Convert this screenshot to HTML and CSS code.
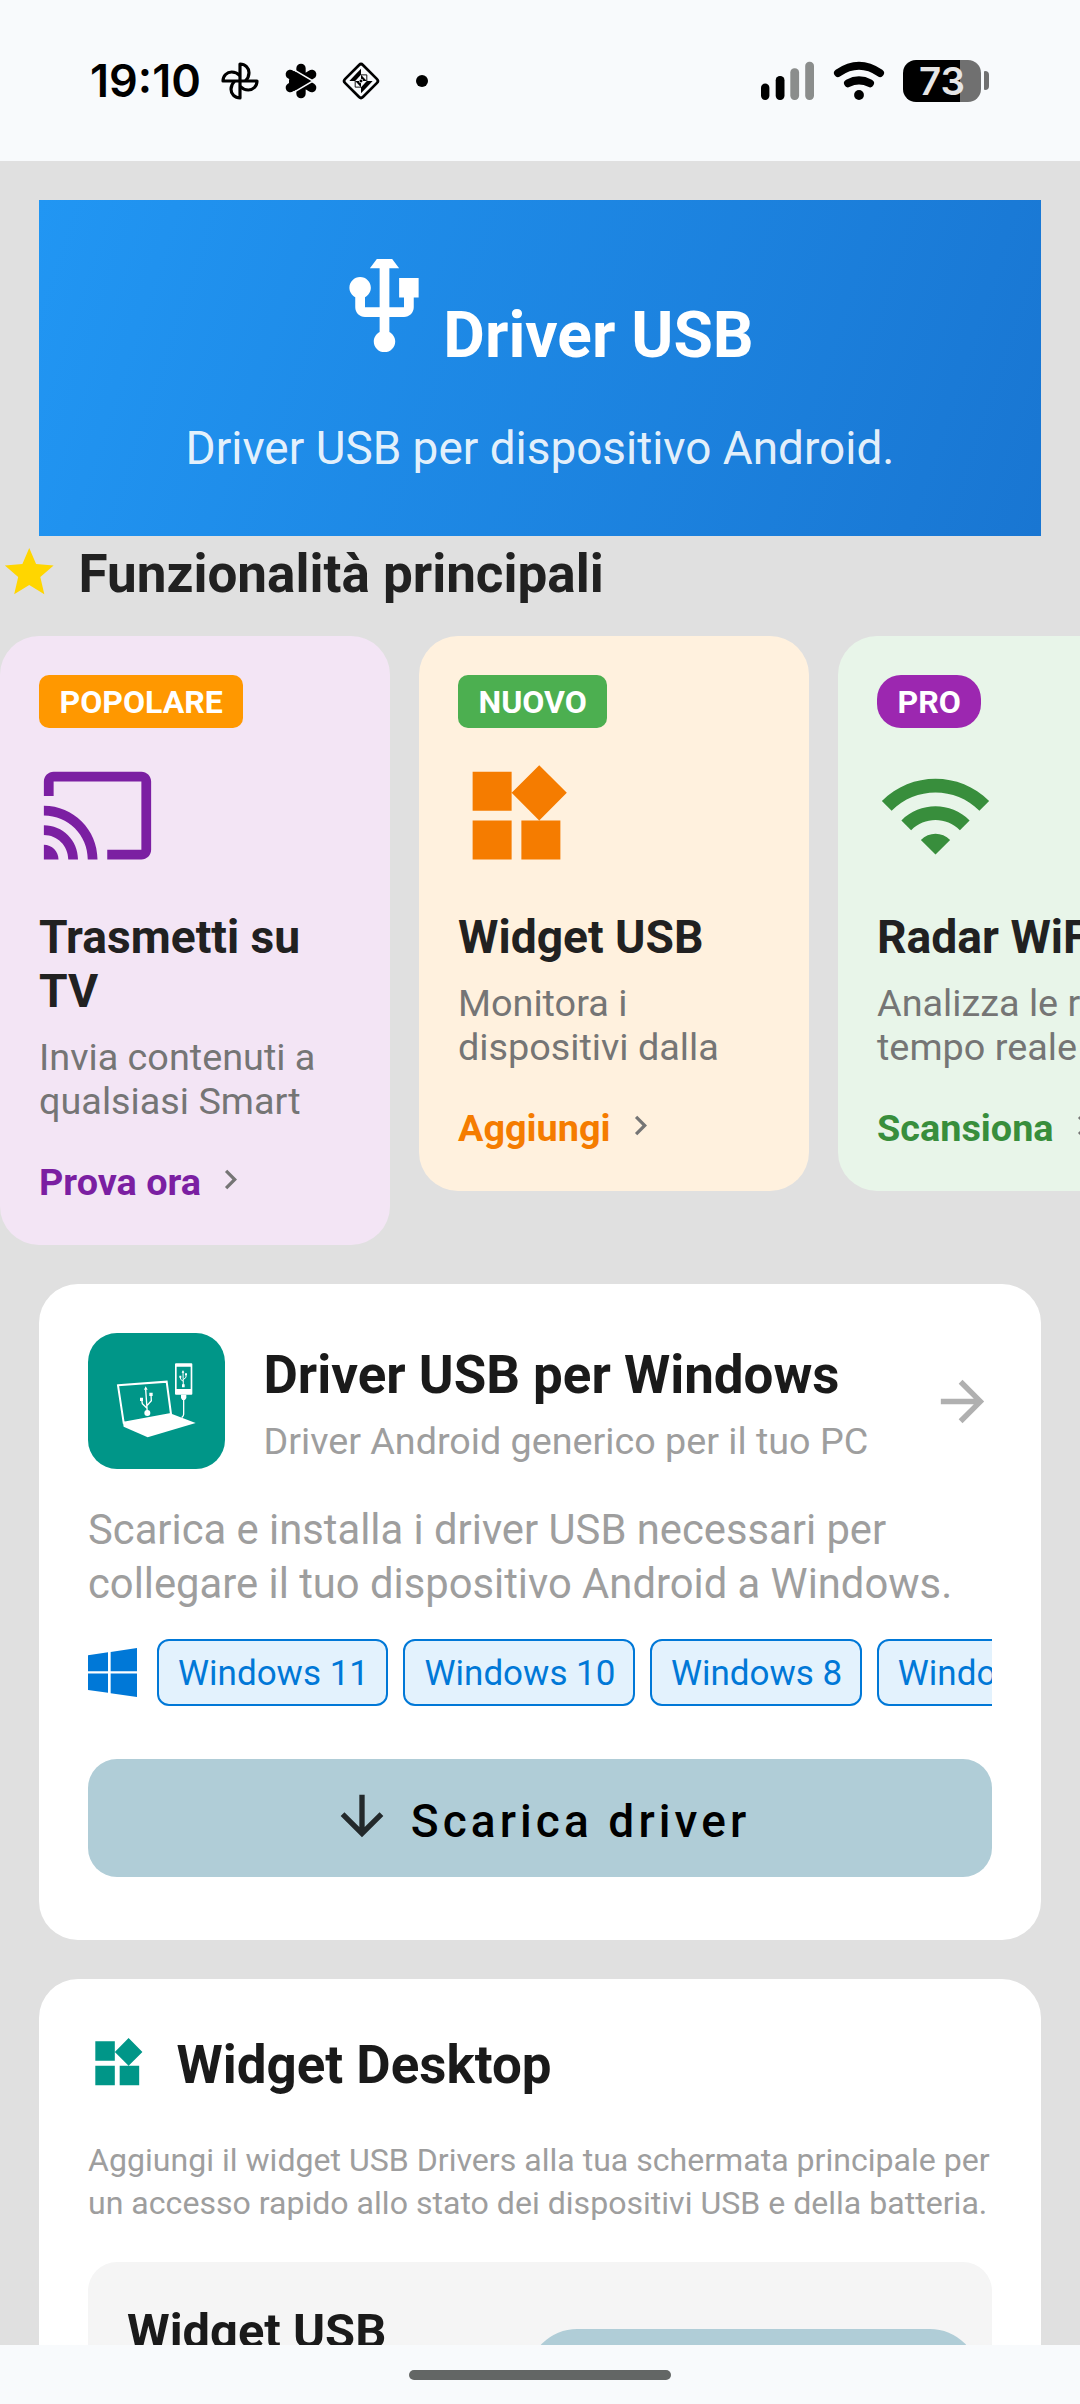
FILE: index.html
```
<!DOCTYPE html>
<html lang="it">
<head>
<meta charset="utf-8">
<title>Driver USB</title>
<link rel="stylesheet" href="styles.css">
</head>
<body>
<div class="screen">
  <header class="status">
    <div class="status-left">
      <span class="clock">19:10</span>
      <svg class="notif" viewBox="-60 -60 120 120" fill="none" stroke="#000" stroke-width="9.5" stroke-linejoin="round">
        <path id="blade" d="M0 0V-51C16-51 27-39 27-25C27-14 23-7 16 0"/>
        <use href="#blade" transform="rotate(90)"/>
        <use href="#blade" transform="rotate(180)"/>
        <use href="#blade" transform="rotate(270)"/>
      </svg>
      <svg class="notif" viewBox="-60 -60 120 120">
        <g stroke="#000" stroke-width="28" stroke-linecap="round">
          <path d="M0-38V38M-32-20L32 20M32-20L-32 20"/>
        </g>
        <path d="M-36-4L-20-30 36 0-20 30-36 4z"/>
        <path d="M-22-34L36 0-22 34" fill="none" stroke="#f8fafc" stroke-width="4.5"/>
      </svg>
      <svg class="notif" viewBox="-60 -60 120 120">
        <rect x="-38" y="-38" width="76" height="76" rx="8" transform="rotate(45)" fill="none" stroke="#000" stroke-width="8"/>
        <g transform="scale(.92)">
          <path d="M0-40V-20H-19zM-38 0L-19-20V0zM0-20L19 0H0zM-19-20H0L-19 0zM-19 0H0V20zM0 20L19 0V20zM19 0H38L19 20zM0 20H19L0 40z"/>
          <path d="M0-20L19-20 19 0M-19 0V20H0" fill="none" stroke="#000" stroke-width="3"/>
          <circle r="7" fill="#f8fafc"/><path d="M0-6L6 0 0 6-6 0z"/>
        </g>
      </svg>
      <span class="more"></span>
    </div>
    <div class="status-right">
      <svg class="signal" width="54" height="42" viewBox="0 0 54 42">
        <rect x="1" y="23.5" width="8.4" height="16.5" rx="4.2"/>
        <rect x="15.7" y="16" width="8.8" height="24" rx="4.2"/>
        <rect x="30.3" y="8.2" width="8.8" height="31.8" rx="4.2" fill="#8b8d8c"/>
        <rect x="45.2" y="1.8" width="8.8" height="38.2" rx="4.2" fill="#8b8d8c"/>
      </svg>
      <svg class="wifi" width="52" height="42" viewBox="0 0 52 42" fill="none" stroke="#000" stroke-width="8" stroke-linecap="round">
        <path d="M5 13Q26-1.5 47 13M15 23.200Q26 17.500 37 23.200"/>
        <circle cx="26" cy="35" r="4.900" fill="#000" stroke="none"/>
      </svg>
      <div class="battery">73</div>
      <span class="battery-cap"></span>
    </div>
  </header>

  <main class="content">
    <section class="hero">
      <div class="hero-title">
        <svg width="117" height="94" viewBox="0 3.1 24 19.28" fill="#fff"><path d="M15 7v4h1v2h-3V5h2l-3-4-3 4h2v8H8v-2.070c.7-.37 1.200-1.080 1.200-1.930 0-1.210-.99-2.200-2.200-2.200-1.210 0-2.200.99-2.200 2.200 0 .85.5 1.560 1.200 1.930V13c0 1.110.89 2 2 2h3v3.050c-.71.37-1.200 1.100-1.200 1.950 0 1.220.99 2.200 2.200 2.200 1.210 0 2.200-.98 2.200-2.200 0-.85-.49-1.580-1.200-1.950V15h3c1.110 0 2-.89 2-2v-2h1V7h-4z"/></svg>
        <h1>Driver USB</h1>
      </div>
      <p>Driver USB per dispositivo Android.</p>
    </section>

    <div class="section-head">
      <svg width="58.5" height="58.5" viewBox="0 0 24 24" fill="#ffd600"><path d="M12 17.270L18.180 21l-1.640-7.030L22 9.240l-7.190-.61L12 2 9.190 8.630 2 9.240l5.460 4.730L5.820 21z"/></svg>
      <h2>Funzionalità principali</h2>
    </div>

    <div class="features">
      <article class="feature cast">
        <span class="badge">POPOLARE</span>
        <svg class="feature-icon" viewBox="0 0 24 24"><path d="M21 3H3c-1.100 0-2 .9-2 2v3h2V5h18v14h-7v2h7c1.100 0 2-.9 2-2V5c0-1.100-.9-2-2-2zM1 18v3h3c0-1.660-1.340-3-3-3zm0-4v2c2.760 0 5 2.240 5 5h2c0-3.870-3.130-7-7-7zm0-4v2c4.970 0 9 4.030 9 9h2c0-6.080-4.930-11-11-11z"/></svg>
        <h3>Trasmetti su TV</h3>
        <p>Invia contenuti a qualsiasi Smart</p>
        <div class="action"><span>Prova ora</span><svg viewBox="0 0 24 24"><path d="M10 6L8.590 7.410 13.170 12l-4.580 4.590L10 18l6-6z"/></svg></div>
      </article>
      <article class="feature widget">
        <span class="badge">NUOVO</span>
        <svg class="feature-icon" viewBox="0 0 24 24"><path d="M13 13v8h8v-8h-8zM3 21h8v-8H3v8zM3 3v8h8V3H3zm13.660-1.310L11 7.340 16.660 13l5.660-5.660-5.660-5.650z"/></svg>
        <h3>Widget USB</h3>
        <p>Monitora i dispositivi dalla</p>
        <div class="action"><span>Aggiungi</span><svg viewBox="0 0 24 24"><path d="M10 6L8.590 7.410 13.170 12l-4.580 4.590L10 18l6-6z"/></svg></div>
      </article>
      <article class="feature radar">
        <span class="badge">PRO</span>
        <svg class="feature-icon" viewBox="0 0 24 24"><path d="M1 9l2 2c4.970-4.970 13.030-4.970 18 0l2-2C16.930 2.930 7.080 2.930 1 9zm8 8l3 3 3-3c-1.650-1.660-4.340-1.660-6 0zm-4-4l2 2c2.760-2.760 7.240-2.760 10 0l2-2C15.140 9.140 8.870 9.140 5 13z"/></svg>
        <h3>Radar WiFi</h3>
        <p>Analizza le reti in<br>tempo reale</p>
        <div class="action"><span>Scansiona</span><svg viewBox="0 0 24 24"><path d="M10 6L8.590 7.410 13.170 12l-4.580 4.590L10 18l6-6z"/></svg></div>
      </article>
    </div>

    <section class="card driver">
      <div class="driver-head">
        <svg class="tile" viewBox="0 0 136.5 136.5">
          <g transform="translate(22 27) scale(.3333)" fill="none" stroke="#fff">
            <path d="M24 76L170 65 183 162 41 188z" stroke-width="6"/>
            <path d="M39 188L184 161 257 189 113 232 41 200z" fill="#fff" stroke="none"/>
            <path d="M107 88L112 158M95 118L97 131 111 145M123 103L124 122 111 137" stroke-width="4"/>
            <path d="M107 79l6 10h-11zM90 113h9v10h-9zM118 98h10v10h-10z" fill="#fff" stroke="none"/>
            <circle cx="112" cy="159" r="9" fill="#fff" stroke="none"/>
            <path d="M195 13q0-3 3-3h46q3 0 3 3v88q0 3-3 3h-46q-3 0-3-3zM200 20v67h42V20z" fill="#fff" fill-rule="evenodd" stroke="none"/>
            <path d="M219 34L220 76M211 50L212 58 220 64M228 43V52L220 59" stroke-width="3"/>
            <path d="M219 30l4 8h-8zM208 47h6v6h-6zM225 40h6v6h-6zM216 73h8v9h-8zM213 104h16v10l-4 6h-8l-4-6z" fill="#fff" stroke="none"/>
            <path d="M221 118V163Q221 169 215 173" stroke-width="4"/>
          </g>
        </svg>
        <div class="driver-names">
          <h2>Driver USB per Windows</h2>
          <p>Driver Android generico per il tuo PC</p>
        </div>
        <svg class="go" viewBox="0 0 24 24" fill="#b0b0b0"><path d="M12 4l-1.410 1.410L16.170 11H4v2h12.170l-5.580 5.590L12 20l8-8z"/></svg>
      </div>
      <p class="driver-text">Scarica e installa i driver USB necessari per<br>collegare il tuo dispositivo Android a Windows.</p>
      <div class="chips">
        <svg viewBox="0 0 24 24" fill="#0078d7"><path d="M0 3.500L9.800 2.100V11.400H0zM11.100 1.900L24 0V11.400H11.100zM0 12.500H9.800V21.900L0 20.600zM11.100 12.500H24V24L11.100 22.200z"/></svg>
        <span>Windows 11</span><span>Windows 10</span><span>Windows 8</span><span>Windows 7</span>
      </div>
      <button class="download">
        <svg viewBox="0 0 24 24" fill="#23292b"><path d="M20 12l-1.410-1.410L13 16.170V4h-2v12.170l-5.580-5.590L4 12l8 8z"/></svg>
        <span>Scarica driver</span>
      </button>
    </section>

    <section class="card desktop">
      <div class="desktop-head">
        <svg viewBox="0 0 24 24" fill="#009688"><path d="M13 13v8h8v-8h-8zM3 21h8v-8H3v8zM3 3v8h8V3H3zm13.660-1.310L11 7.340 16.660 13l5.660-5.660-5.660-5.650z"/></svg>
        <h2>Widget Desktop</h2>
      </div>
      <p class="desktop-text">Aggiungi il widget USB Drivers alla tua schermata principale per<br>un accesso rapido allo stato dei dispositivi USB e della batteria.</p>
      <div class="widget-box">
        <h3>Widget USB</h3>
        <button class="add" aria-label="Aggiungi"></button>
      </div>
    </section>
  </main>

  <footer class="nav"><span class="handle"></span></footer>
</div>
</body>
</html>
```
FILE: styles.css
```
* { box-sizing: border-box; }
body { margin: 0; font-family: Roboto, "Liberation Sans", sans-serif; }
h1, h2, h3, p { margin: 0; }
svg { display: block; flex: none; }
button { border: 0; padding: 0; font-family: inherit; }

.screen { width: 1080px; height: 2404px; display: flex; flex-direction: column; overflow: hidden; background: #e0e0e0; }

/* Status bar */
.status { flex: none; height: 161px; padding: 0 90px; display: flex; justify-content: space-between; align-items: center; background: #f8fafc; }
.status-left, .status-right { display: flex; align-items: center; }
.clock { width: 109px; margin-right: 21px; font: 600 45px/60px Inter, sans-serif; white-space: nowrap; }
.notif { width: 40px; height: 40px; margin-right: 20.600px; }
.more { width: 12px; height: 12px; margin-left: 14.500px; border-radius: 50%; background: #000; }
.wifi { margin-left: 19px; }
.battery { width: 78px; height: 42px; margin-left: 18.500px; border-radius: 13px; background: linear-gradient(90deg, #000 57.500px, #707070 57.500px); color: #e6e6e6; font: 600 38.500px/42px Inter, sans-serif; text-align: center; }
.battery-cap { width: 5px; height: 19px; margin-left: 3px; margin-right: 1px; border-radius: 1px 4px 4px 1px; background: #707070; }

.content { flex: 1; min-height: 0; padding-top: 39px; overflow: hidden; }

/* Banner */
.hero { height: 336px; margin: 0 39px; padding-top: 59px; background: linear-gradient(108.500deg, #2196f3, #1976d2); color: #fff; text-align: center; }
.hero-title { height: 114px; display: flex; justify-content: center; }
.hero h1 { align-self: flex-end; font-size: 64px; line-height: 75px; }
.hero p { margin-top: 48px; font-size: 45.900px; line-height: 54px; color: rgba(255, 255, 255, 0.9); }

.section-head { height: 100px; padding-top: 7px; display: flex; gap: 20px; color: #212121; }
.section-head h2 { font-size: 53px; line-height: 62px; }

/* Feature carousel */
.features { display: flex; align-items: flex-start; gap: 29px; overflow: hidden; }
.feature { flex: none; width: 390px; padding: 39px; border-radius: 39px; }
.badge { display: block; width: fit-content; height: 53px; padding: 2px 20.500px 0; border-radius: 10px; font-size: 32.100px; font-weight: 700; line-height: 51px; color: #fff; }
.feature-icon { width: 117px; height: 117px; margin-top: 29px; fill: currentColor; }
.feature h3 { margin-top: 35.500px; font-size: 46.200px; line-height: 54px; color: #212121; }
.feature p { margin-top: 17px; font-size: 37.800px; line-height: 44px; color: #757575; }
.action { display: flex; height: 46px; margin-top: 37px; gap: 10px; font-size: 37.800px; font-weight: 700; line-height: 44px; }
.action svg { width: 39px; height: 39px; fill: #757575; }
.cast { background: #f3e5f5; color: #7b1fa2; }
.cast .badge { background: #ff9800; }
.widget { background: #fff1de; color: #f57c00; }
.widget .badge { background: #4caf50; }
.radar { background: #e8f5e9; color: #388e3c; }
.radar .badge { background: #9c27b0; border-radius: 24px; }

.card { margin: 39px 39px 0; border-radius: 39px; background: #fff; }
.card h2 { font-size: 52.900px; line-height: 62px; color: #1a1a1a; white-space: nowrap; }
.card p { color: #9e9e9e; white-space: nowrap; }

/* Windows driver card */
.driver { padding: 49px 49px 63px; }
.driver-head { display: flex; height: 137px; }
.tile { width: 136.500px; height: 136.500px; border-radius: 29px; background: #009688; }
.driver-names { flex: 1; padding: 11px 0 0 39px; }
.driver-names p { margin-top: 13px; font-size: 37.700px; line-height: 44px; }
.go { width: 65px; height: 65px; margin: 36px -3px 0 0; }
.driver-text { margin-top: 33px; font-size: 41.750px; line-height: 54px; }
.chips { display: flex; align-items: center; gap: 15px; margin-top: 28px; overflow: hidden; }
.chips svg { width: 49px; height: 49px; margin-right: 5px; }
.chips span { flex: none; height: 67px; padding: 2px 17.500px 0 19px; border: 2px solid #0078d7; border-radius: 12px; background: #e3f2fd; color: #0078d7; font-size: 35px; line-height: 61px; }
.download { display: flex; justify-content: center; width: 904px; height: 118px; margin-top: 53px; gap: 17px; border-radius: 29px; background: #b0cdd7; color: #000; }
.download svg { width: 64px; height: 64px; margin-top: 25px; }
.download span { margin-top: 35px; font-size: 46px; font-weight: 500; line-height: 54px; letter-spacing: 4.100px; white-space: nowrap; }

/* Desktop widget card */
.desktop { padding: 55px 49px 49px; }
.desktop-head { display: flex; gap: 30px; }
.desktop-head svg { width: 58.500px; height: 58.500px; }
.desktop-text { margin-top: 43px; font-size: 32.100px; line-height: 43px; }
.widget-box { display: flex; justify-content: space-between; height: 200px; margin-top: 37px; padding: 41px 13px 0 39px; border-radius: 29px; background: #f5f5f5; }
.widget-box h3 { font-size: 48.800px; line-height: 57px; color: #1a1a1a; }
.add { width: 451px; height: 98px; margin-top: 26px; border-radius: 49px; background: #b0cdd7; }

/* Gesture navigation */
.nav { flex: none; height: 59px; padding-top: 25px; display: flex; justify-content: center; background: #f8fafc; }
.handle { width: 262px; height: 10px; border-radius: 5px; background: #636665; }
```
